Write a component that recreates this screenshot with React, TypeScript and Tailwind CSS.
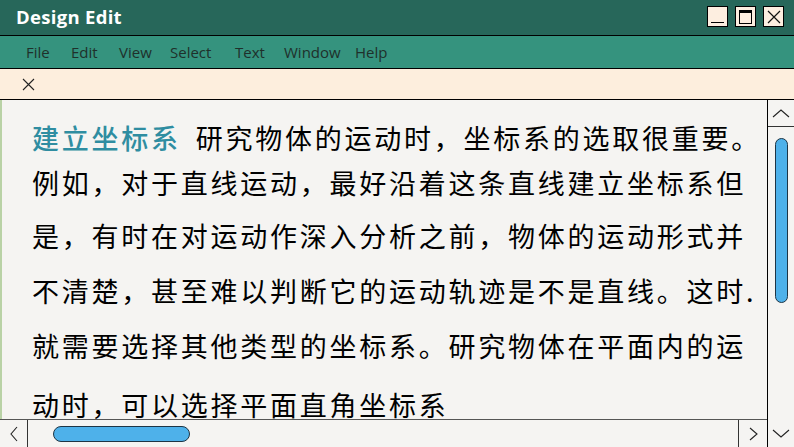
import React from "react"

// menu labels with the width each one takes in the bar
const menus: { label: string; w: string }[] = [
  { label: "File", w: "w-[45px]" },
  { label: "Edit", w: "w-[48px]" },
  { label: "View", w: "w-[51px]" },
  { label: "Select", w: "w-[65px]" },
  { label: "Text", w: "w-[49px]" },
  { label: "Window", w: "w-[71px]" },
  { label: "Help", w: "w-[50px]" },
]

// each line placed by its own top margin to follow the slide's uneven spacing
const lines: { text: string; cls: string }[] = [
  { text: "例如，对于直线运动，最好沿着这条直线建立坐标系但", cls: "h-[44px] mt-[1px]" },
  { text: "是，有时在对运动作深入分析之前，物体的运动形式并", cls: "h-[44px] mt-[9px]" },
  { text: "不清楚，甚至难以判断它的运动轨迹是不是直线。这时.", cls: "h-[44px] mt-[11px]" },
  { text: "就需要选择其他类型的坐标系。研究物体在平面内的运", cls: "h-[44px] mt-[11px]" },
  { text: "动时，可以选择平面直角坐标系", cls: "h-[28px] leading-[28px] mt-[23px]" },
]

function Chevron({ dir, className }: { dir: "up" | "down" | "left" | "right"; className?: string }) {
  const d = {
    up: "M1 8 L9 1 L17 8",
    down: "M1 1 L9 8 L17 1",
    left: "M7 1 L1 8 L7 15",
    right: "M1 1 L8 7 L1 13",
  }[dir]
  const box = dir === "up" || dir === "down" ? "0 0 18 9" : dir === "left" ? "0 0 8 16" : "0 0 9 14"
  return (
    <svg viewBox={box} className={className} fill="none" stroke="#222" strokeWidth="1.1">
      <path d={d} />
    </svg>
  )
}

export default function App() {
  return (
    <div className="w-[794px] h-[447px] overflow-hidden flex flex-col bg-[#f5f4f2] font-['Open_Sans',sans-serif]">
      {/* title bar */}
      <div className="h-[36px] shrink-0 flex items-center justify-between bg-[#27675a] border-b border-black pl-4 pr-[10px]">
        <span className="text-white font-bold text-[18.5px] tracking-[0.3px] -mt-[1px]">Design Edit</span>
        <div className="flex gap-[7px] -mt-[2px]">
          <div className="w-[21px] h-[21px] bg-[#fdeee0] border-[1.5px] border-black flex items-end justify-center pb-[3px]">
            <div className="w-[13px] h-[1.5px] bg-black" />
          </div>
          <div className="w-[21px] h-[21px] bg-[#fdeee0] border-[1.5px] border-black flex items-center justify-center">
            <div className="w-[13px] h-[14px] border border-black border-t-[3px]" />
          </div>
          <div className="w-[21px] h-[21px] bg-[#fdeee0] border-[1.5px] border-black flex items-center justify-center">
            <svg viewBox="0 0 14 14" className="w-[14px] h-[14px]" stroke="#111" strokeWidth="1.2">
              <path d="M1 1 L13 13 M13 1 L1 13" />
            </svg>
          </div>
        </div>
      </div>

      {/* menu bar */}
      <div className="h-[33px] shrink-0 flex items-center bg-[#35937e] border-b border-black pl-[26px] text-[15px] text-[#1f302b]">
        {menus.map((m) => (
          <span key={m.label} className={m.w}>
            {m.label}
          </span>
        ))}
      </div>

      {/* tab strip */}
      <div className="h-[31px] shrink-0 flex items-center bg-[#fdeedd] border-b border-black pl-[22px]">
        <svg viewBox="0 0 13 13" className="w-[13px] h-[13px]" stroke="#222" strokeWidth="1.1">
          <path d="M1 1 L12 12 M12 1 L1 12" />
        </svg>
      </div>

      {/* document area */}
      <div className="flex-1 flex min-h-0">
        <div className="flex-1 flex flex-col min-w-0">
          <div className="flex-1 overflow-hidden border-l-2 border-[#b9d2a6] pl-[30px] pt-[16px] text-[27px] tracking-[2.75px] leading-[44px] text-black font-['Noto_Sans_CJK_SC',sans-serif] whitespace-nowrap">
            <div className="h-[44px]">
              <span className="text-[#2f8da1] font-medium mr-[15px]">建立坐标系</span>
              研究物体的运动时，坐标系的选取很重要。
            </div>
            {lines.map((l) => (
              <div key={l.text} className={l.cls}>
                {l.text}
              </div>
            ))}
          </div>
          {/* horizontal scrollbar */}
          <div className="h-[28px] shrink-0 flex border-t border-[#555]">
            <div className="w-[28px] border-r border-[#333] flex items-center justify-center">
              <Chevron dir="left" className="w-[8px] h-[16px]" />
            </div>
            <div className="flex-1 flex items-center pl-[25px]">
              <div className="w-[137px] h-[16px] rounded-full bg-[#4eb1ea] border border-[#1e3545]" />
            </div>
            <div className="w-[29px] border-l border-[#333] flex items-center justify-center">
              <Chevron dir="right" className="w-[9px] h-[14px]" />
            </div>
          </div>
        </div>

        {/* vertical scrollbar */}
        <div className="w-[27px] shrink-0 flex flex-col border-l border-black">
          <div className="h-[27px] border-b border-[#333] flex items-center justify-center">
            <Chevron dir="up" className="w-[18px] h-[9px]" />
          </div>
          <div className="flex-1 flex justify-center pt-[11px]">
            <div className="w-[13px] h-[165px] rounded-full bg-[#4eb1ea] border border-[#1e3545]" />
          </div>
          <div className="h-[28px] flex items-center justify-center">
            <Chevron dir="down" className="w-[18px] h-[9px]" />
          </div>
        </div>
      </div>
    </div>
  )
}
